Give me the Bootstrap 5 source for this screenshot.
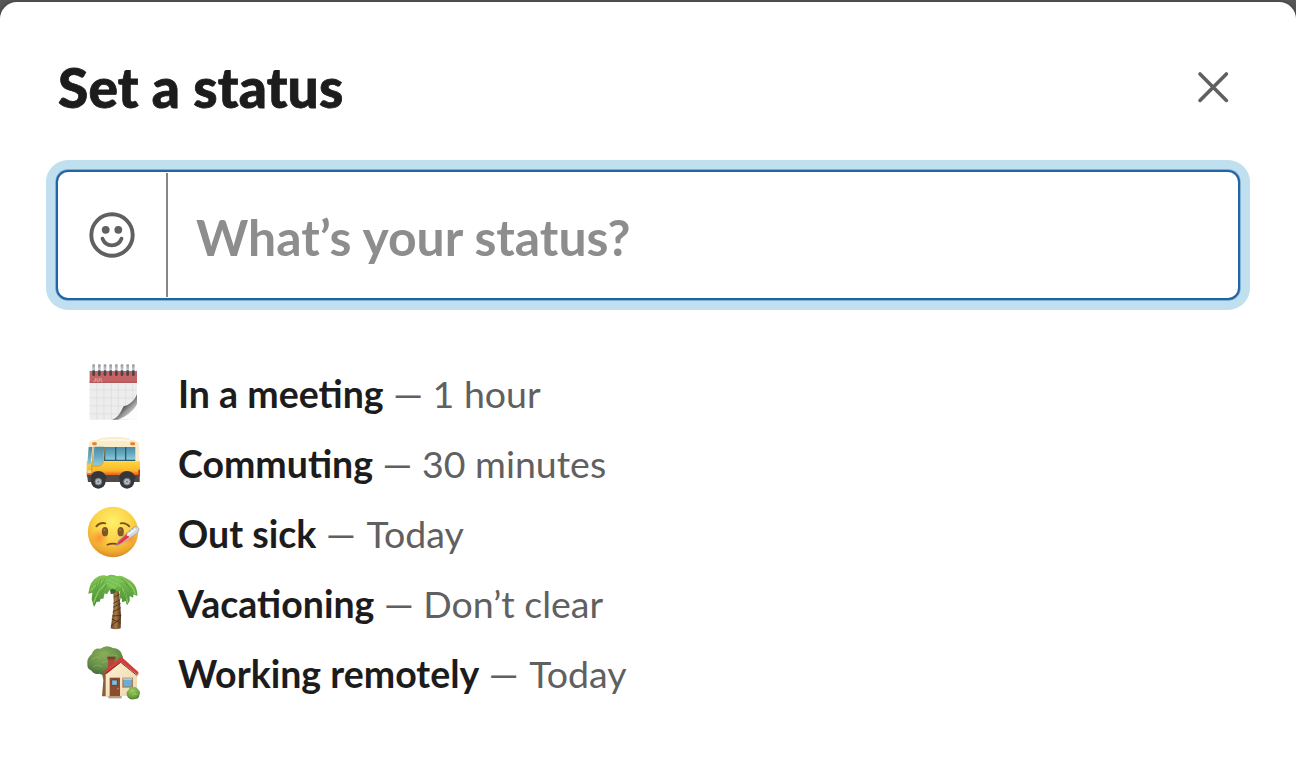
<!DOCTYPE html>
<html lang="en">
<head>
<meta charset="utf-8">
<meta name="viewport" content="width=device-width, initial-scale=1">
<title>Set a status</title>
<link href="https://cdn.jsdelivr.net/npm/bootstrap@5.3.0/dist/css/bootstrap.min.css" rel="stylesheet">
<style>
  body { font-family: Lato, "Liberation Sans", sans-serif; color: #1d1c1d; background: #585657; overflow: hidden; }
  .status-dialog { height: 756px; margin-top: 2px; border-radius: 17px 17px 0 0; padding: 0 56px; box-shadow: 0 0 5px rgba(0,0,0,.35); }
  .dialog-head { height: 168px; padding: 1px 11px 0 2px; }
  .dialog-title { font-size: 55px; font-weight: 900; line-height: 64px; letter-spacing: .15px; -webkit-text-stroke: .8px #1d1c1d; }
  .close-btn { width: 32px; height: 32px; }
  .status-field { height: 130px; border: 2px solid #2365a4; border-radius: 12px; box-shadow: 0 0 0 .7px #6b9fcb, 0 0 0 10px #c0e0ef; }
  .emoji-btn { width: 108px; padding: 0 1px 1px 0; }
  .field-rule { width: 2px; margin: 1px 0; background: #868686; }
  .status-input { font-size: 49.9px; font-weight: 700; padding: 5px 28px 0; color: #1d1c1d; background: transparent; outline: 0; min-width: 0; }
  .status-input::placeholder { color: #8d8d8d; opacity: 1; }
  .preset-list { margin: 57px 0 0 28px; }
  .preset { height: 70px; font-size: 37.5px; line-height: 60px; gap: 34px; }
  .preset svg { width: 60px; height: 60px; margin-top: 5px; flex: none; }
  .preset-text { padding-top: 7px; white-space: pre; color: #616061; }
  .preset-text b { color: #1d1c1d; font-weight: 700; }
  .preset-day { margin-left: 1px; }
</style>
</head>
<body>
<main class="status-dialog bg-white">
  <header class="dialog-head d-flex align-items-center justify-content-between">
    <h1 class="dialog-title m-0">Set a status</h1>
    <button class="close-btn btn p-0 border-0 d-flex" aria-label="Close">
      <svg width="32" height="32" viewBox="0 0 32 32" fill="none" stroke="#616061" stroke-width="3.6" stroke-linecap="round"><path d="M3 3 29.400 29.400M29.400 3 3 29.400"/></svg>
    </button>
  </header>

  <div class="status-field d-flex bg-white">
    <button class="emoji-btn btn border-0 d-flex align-items-center justify-content-center" aria-label="Choose emoji">
      <svg width="46" height="46" viewBox="0 0 46 46"><circle cx="23" cy="23" r="20.700" fill="none" stroke="#616061" stroke-width="3.900"/><circle cx="16.700" cy="17.800" r="3.900" fill="#616061"/><circle cx="29.300" cy="17.800" r="3.900" fill="#616061"/><path d="M13.500 26.600c1.500 4.200 5 6.700 9.300 6.700s8.200-2.500 9.700-6.700" fill="none" stroke="#616061" stroke-width="3.800" stroke-linecap="round"/></svg>
    </button>
    <div class="field-rule"></div>
    <input class="status-input flex-grow-1 border-0" type="text" placeholder="What’s your status?" aria-label="Status">
  </div>

  <ul class="preset-list list-unstyled mb-0">
    <li class="preset d-flex">
      <svg viewBox="24 21 180 180">
        <defs>
          <linearGradient id="curl" x1="0" y1="0" x2="1" y2="1"><stop offset=".15" stop-color="#dcdcdc"/><stop offset=".48" stop-color="#555"/><stop offset=".62" stop-color="#999"/><stop offset=".9" stop-color="#f8f8f8"/></linearGradient>
          <linearGradient id="ring" x2="0" y2="1"><stop stop-color="#8e9398"/><stop offset=".5" stop-color="#c4ccd3"/><stop offset="1" stop-color="#444"/></linearGradient>
        </defs>
        <path d="M41 46H183V194H41Z" fill="#ededed"/>
        <path d="M41 105H183M41 129H183M41 153H183M41 177H140M63 84V194M84 84V194M106 84V194M127 84V178M149 84V150M170 84V140" stroke="#dedede" stroke-width="2.500"/>
        <path d="M41 48H183V83H41Z" fill="#c26466"/>
        <path d="M41 79H183V84H41Z" fill="#b45a5c"/>
        <path d="M51 79h7V69M63 69v10h7V69M75 69v10h5" fill="none" stroke="#e9b8b8" stroke-width="2"/>
        <path d="M108 194C128 189 134 170 143 154C158 152 176 137 183 118V194Z" fill="url(#curl)"/>
        <path d="M126 194C152 184 174 166 183 147V194Z" fill="#fcfcfc"/>
        <g fill="url(#ring)"><rect x="49" y="28" width="8" height="32" rx="3"/><rect x="66" y="28" width="8" height="32" rx="3"/><rect x="83" y="28" width="8" height="32" rx="3"/><rect x="100" y="28" width="8" height="32" rx="3"/><rect x="117" y="28" width="8" height="32" rx="3"/><rect x="134" y="28" width="8" height="32" rx="3"/><rect x="151" y="28" width="8" height="32" rx="3"/><rect x="168" y="28" width="8" height="32" rx="3"/></g>
        <path d="M53 50v9M70 50v9M87 50v9M104 50v9M121 50v9M138 50v9M155 50v9M172 50v9" stroke="#574040" stroke-width="8" stroke-linecap="round"/>
      </svg>
      <span class="preset-text"><b>In a meeting</b> — 1 hour</span>
    </li>
    <li class="preset d-flex">
      <svg viewBox="24 6 180 180">
        <defs>
          <linearGradient id="paint" x2="0" y2="1"><stop stop-color="#ffd53c"/><stop offset=".55" stop-color="#fbb62c"/><stop offset=".72" stop-color="#f06d22"/><stop offset="1" stop-color="#d84f18"/></linearGradient>
          <linearGradient id="pane" x2="0" y2="1"><stop stop-color="#4b8ba3"/><stop offset=".5" stop-color="#65a9c0"/><stop offset="1" stop-color="#8fcddd"/></linearGradient>
        </defs>
        <path d="M40 37Q44 30 65 29L76 24Q124 17 158 25L163 30Q187 31 189 42L191 98H33Z" fill="#f8eccb"/>
        <path d="M72 31Q120 27 161 32" stroke="#fff9e8" stroke-width="4" fill="none"/>
        <path d="M32 94H192V136L184 146H40L32 138Z" fill="url(#paint)"/>
        <path d="M33 135H191V156H36Z" fill="#4e4b46"/>
        <path d="M38 51H49L44 102L34 105Z" fill="url(#pane)"/>
        <path d="M55 50H85L81 94Q79 106 65 107H50Z" fill="url(#pane)"/>
        <path d="M89 51H178V90H88Z" fill="url(#pane)"/>
        <path d="M119 51V90M149 51V90M87 51 86 91H178" stroke="#315a6d" stroke-width="4" fill="none"/>
        <path d="M52 50 46 134M86 51 82 94Q80 107 67 108H50" stroke="#b18739" stroke-width="2" fill="none"/>
        <rect x="49" y="37" width="13" height="9" rx="3" fill="#eb7e2a"/><rect x="163" y="37" width="14" height="9" rx="3" fill="#eb7e2a"/>
        <path d="M34 121h12v8H34z" fill="#e7dca0"/><path d="M187 119h5v17h-5z" fill="#c53422"/>
        <path d="M43 144Q47 123 67 123T93 146ZM128 146Q132 123 153 123T180 146Z" fill="#383737"/>
        <circle cx="67" cy="154" r="22" fill="#34373c"/><circle cx="153" cy="154" r="22" fill="#34373c"/>
        <circle cx="67" cy="155" r="10" fill="#b5b9bc" stroke="#777c80" stroke-width="3"/><circle cx="153" cy="155" r="10" fill="#b5b9bc" stroke="#777c80" stroke-width="3"/>
        <circle cx="67" cy="155" r="3" fill="#777c80"/><circle cx="153" cy="155" r="3" fill="#777c80"/>
      </svg>
      <span class="preset-text"><b>Commuting</b> — 30 minutes</span>
    </li>
    <li class="preset d-flex">
      <svg viewBox="24 6 180 180">
        <defs>
          <radialGradient id="skin" cx=".5" cy=".3" r=".7"><stop stop-color="#fff06a"/><stop offset=".55" stop-color="#fbd246"/><stop offset=".85" stop-color="#efaa30"/><stop offset="1" stop-color="#d98a27"/></radialGradient>
          <radialGradient id="fever"><stop stop-color="#ff6d2f" stop-opacity=".65"/><stop offset="1" stop-color="#ff8130" stop-opacity="0"/></radialGradient>
        </defs>
        <circle cx="111" cy="96" r="75.500" fill="url(#skin)"/>
        <circle cx="71" cy="113" r="27" fill="url(#fever)"/><circle cx="160" cy="113" r="23" fill="url(#fever)"/>
        <ellipse cx="87" cy="95" rx="9.500" ry="14" fill="#7f5627"/><ellipse cx="134" cy="95" rx="9.500" ry="14" fill="#7f5627"/>
        <circle cx="85" cy="90" r="3" fill="#ae7b38"/><circle cx="132" cy="90" r="3" fill="#ae7b38"/>
        <path d="M61 79Q72 66 88 70M134 70Q149 67 160 79" fill="none" stroke="#805018" stroke-width="5.500" stroke-linecap="round"/>
        <path d="M94 134Q109 128 126 133" fill="none" stroke="#76451e" stroke-width="5" stroke-linecap="round"/>
        <path d="M120 137 127 122 174 81Q187 77 189 88Q189 92 184 99L137 131Z" fill="#d4d7dc" stroke="#979ba5" stroke-width="2"/>
        <path d="M121 136 129 122 152 102 160 111 136 130Z" fill="#e13b47"/>
        <path d="M155 105 177 88" stroke="#f5f5f7" stroke-width="6" stroke-linecap="round"/>
        <path d="m142 105 4 5m4-12 4 5m5-12 4 5m5-12 4 5" stroke="#8d9097" stroke-width="2"/>
      </svg>
      <span class="preset-text"><b>Out sick</b> — <span class="preset-day">Today</span></span>
    </li>
    <li class="preset d-flex">
      <svg viewBox="24 12 180 180">
        <defs>
          <linearGradient id="trunk"><stop stop-color="#664325"/><stop offset=".5" stop-color="#a77a45"/><stop offset="1" stop-color="#513119"/></linearGradient>
          <linearGradient id="leaf" x2="0" y2="1"><stop stop-color="#85c655"/><stop offset=".5" stop-color="#65aa45"/><stop offset="1" stop-color="#4a8738"/></linearGradient>
        </defs>
        <path d="M111 65Q115 102 111 132L104 181Q118 187 134 181L135 144Q133 103 128 65Z" fill="url(#trunk)"/>
        <path d="M113 88 131 79M112 106 133 95M111 118 134 106M110 132 135 119M108 144 136 142M107 153 135 165M105 174 134 151" stroke="#4a301d" stroke-width="2.500"/>
        <path d="M105 33Q90 15 68 25Q41 37 37 77L49 74 47 94 54 117 62 101 71 101 74 92 82 92 86 76 93 79 100 67 112 62 119 70 131 70 130 90 138 92 138 103 149 99 153 112 161 99 161 84 171 89 173 79 184 84Q185 44 148 29Q129 16 111 31Z" fill="url(#leaf)"/>
        <path d="M104 36Q75 31 43 69M103 42Q71 51 53 105M120 43Q151 65 155 105M127 40Q163 33 178 78" fill="none" stroke="#8ccb5c" stroke-width="4"/>
        <path d="M99 31 87 59M88 31 73 60M74 35 62 71M64 43 56 76M90 51 73 83M75 64 61 92M136 31 154 54M148 38 165 68M135 56 140 84M145 67 152 91" fill="none" stroke="#559c3f" stroke-width="2.500"/>
        <path d="M84 31Q102 12 127 27Q142 40 126 54L113 67Q88 57 91 41Z" fill="#77c252"/>
        <path d="M94 33 126 49M94 44 117 60M104 27 130 38" stroke="#90d168" stroke-width="3"/>
        <path d="M102 66Q110 57 121 69Q114 81 104 77Z" fill="#3b692e"/>
      </svg>
      <span class="preset-text"><b>Vacationing</b> — Don’t clear</span>
    </li>
    <li class="preset d-flex">
      <svg viewBox="24 6 180 180">
        <defs>
          <radialGradient id="crown" cx=".45" cy=".3" r=".7"><stop stop-color="#89ae5b"/><stop offset=".65" stop-color="#668f47"/><stop offset="1" stop-color="#476e38"/></radialGradient>
          <radialGradient id="bush" cx=".45" cy=".3" r=".7"><stop stop-color="#9bc860"/><stop offset=".65" stop-color="#72a645"/><stop offset="1" stop-color="#4c8035"/></radialGradient>
          <linearGradient id="wall" y2="1"><stop stop-color="#fff1d0"/><stop offset="1" stop-color="#ead6ae"/></linearGradient>
        </defs>
        <path d="M76 91H95V169H78L82 120Z" fill="#896038"/>
        <path d="M34 73Q32 54 47 43Q53 23 73 26Q91 12 111 24Q132 25 138 44Q147 59 132 73Q127 95 101 95Q85 110 70 101Q54 105 45 91Q34 88 34 73Z" fill="url(#crown)"/>
        <path d="M48 59q13-14 27-3M74 42q13-11 25 0M52 80q14-10 26 1M78 69q13-10 25 0M105 48q13-8 22 2" fill="none" stroke="#90b75b" stroke-width="4" opacity=".5"/>
        <path d="M96 52H116V86H96Z" fill="#a84a3c"/><path d="M94 50H118V58H94Z" fill="#863a2d"/>
        <path d="M89 98 134 61 183 106V168H89Z" fill="url(#wall)"/>
        <path d="M84 99 87 90 132 54Q136 50 141 55L187 96 187 105 181 102 135 66 92 102Z" fill="#d33f39"/>
        <path d="M88 101 134 67 184 107" stroke="#812b27" stroke-width="3" fill="none"/>
        <path d="M101 113H132V168H101Z" fill="#8b4c30"/><path d="M107 120H124V136H107Z" fill="#79bee3" stroke="#522e21" stroke-width="2"/>
        <circle cx="126" cy="146" r="2" fill="#e2b461"/>
        <rect x="141" y="115" width="28" height="26" fill="#65afd9" stroke="#a67d59" stroke-width="4"/><path d="M141 117H169" stroke="#d6edf5" stroke-width="3"/>
        <path d="M97 168H137V175H97Z" fill="#bb9c7b"/>
        <path d="M153 167Q149 155 158 150Q160 141 170 142Q182 138 187 149Q195 155 190 165Q190 177 177 177Q160 182 153 167Z" fill="url(#bush)"/>
        <path d="M161 155q6-7 13-1M170 165q7-6 13-1" fill="none" stroke="#a9d667" stroke-width="3" opacity=".7"/>
      </svg>
      <span class="preset-text"><b>Working remotely</b> — <span class="preset-day">Today</span></span>
    </li>
  </ul>
</main>
<script src="https://cdn.jsdelivr.net/npm/bootstrap@5.3.0/dist/js/bootstrap.bundle.min.js"></script>
</body>
</html>
